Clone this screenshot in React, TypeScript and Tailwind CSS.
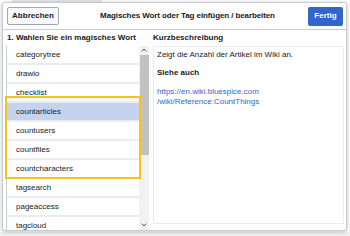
import { ChevronUp, ChevronDown } from 'lucide-react'

const ITEMS = [
  'categorytree',
  'drawio',
  'checklist',
  'countarticles',
  'countusers',
  'countfiles',
  'countcharacters',
  'tagsearch',
  'pageaccess',
  'tagcloud',
]

export default function App() {
  return (
    <div
      className="relative h-[236px] w-[350px] overflow-hidden bg-white text-[#202122]"
      style={{ fontFamily: '"Liberation Sans", Arial, sans-serif' }}
    >
      {/* faint page behind the dialog */}
      <div className="absolute left-[12px] top-0 h-[2px] w-[90px] bg-[#e4e6ea]" />
      <div className="absolute bottom-0 left-0 h-[4px] w-full bg-[#f1f2f4]" />

      {/* Dialog */}
      <div className="relative ml-[2px] mt-[2px] flex h-[229px] w-[345px] flex-col overflow-hidden rounded-[3px] border border-[#c8ccd1] bg-white shadow-[0_1px_4px_rgba(0,0,0,0.25)]">
        {/* Header */}
        <div className="flex h-[27px] shrink-0 items-center justify-between border-b border-[#c8ccd1] pl-[4px] pr-[3px]">
          <button className="flex h-[18px] w-[52px] items-center justify-center rounded-[2px] border border-[#a2a9b1] bg-[#f8f9fa] text-[8px] font-bold text-[#202122]">
            Abbrechen
          </button>
          <span className="pl-[8px] text-[8px] font-bold tracking-[-0.1px]">Magisches Wort oder Tag einfügen / bearbeiten</span>
          <button className="flex h-[19px] w-[35px] items-center justify-center rounded-[2px] bg-[#36c] text-[8px] font-bold text-white">
            Fertig
          </button>
        </div>

        {/* Body */}
        <div className="flex min-h-0 flex-1 gap-[4px] pl-[3px] pr-[2px]">
          {/* Left column */}
          <div className="flex w-[143px] flex-col">
            <div className="flex h-[16px] items-center pl-[1px] text-[8px] font-bold">1. Wahlen Sie ein magisches Wort</div>
            <div className="flex min-h-0 flex-1 border-l border-[#c8ccd1]">
              <div className="flex w-[133px] flex-col gap-[2px] overflow-hidden bg-[#eaecf0]">
                {ITEMS.map((item) => (
                  <div
                    key={item}
                    className={`flex h-[17px] shrink-0 items-center pl-[9px] text-[8px] ${
                      item === 'countarticles' ? 'bg-[#c5d3ef]' : 'bg-white'
                    }`}
                  >
                    {item}
                  </div>
                ))}
              </div>
              {/* Scrollbar */}
              <div className="flex w-[10px] flex-col items-center bg-[#f1f1f1]">
                <ChevronUp className="h-[8px] w-[8px] text-[#505050]" strokeWidth={3} />
                <div className="mt-[1px] h-[100px] w-[9px] bg-[#c1c1c1]" />
                <div className="flex-1" />
                <ChevronDown className="mb-[1px] h-[8px] w-[8px] text-[#505050]" strokeWidth={3} />
              </div>
            </div>
          </div>

          {/* Right column */}
          <div className="flex flex-1 flex-col pb-[6px]">
            <div className="flex h-[16px] items-center text-[8px] font-bold">Kurzbeschreibung</div>
            <div className="flex-1 border border-[#eaecf0] px-[3px] pt-[3px] text-[8px] leading-[10px]">
              <p>Zeigt die Anzahl der Artikel im Wiki an.</p>
              <p className="mt-[8px] font-bold">Siehe auch</p>
              <p className="mt-[9px] text-[#36c]">
                https://en.wiki.bluespice.com
                <br />
                /wiki/Reference:CountThings
              </p>
            </div>
          </div>
        </div>
      </div>

      {/* Highlight overlay */}
      <div className="absolute left-[5px] top-[96px] h-[83px] w-[136px] border-2 border-[#f7c21b]" />
    </div>
  )
}
